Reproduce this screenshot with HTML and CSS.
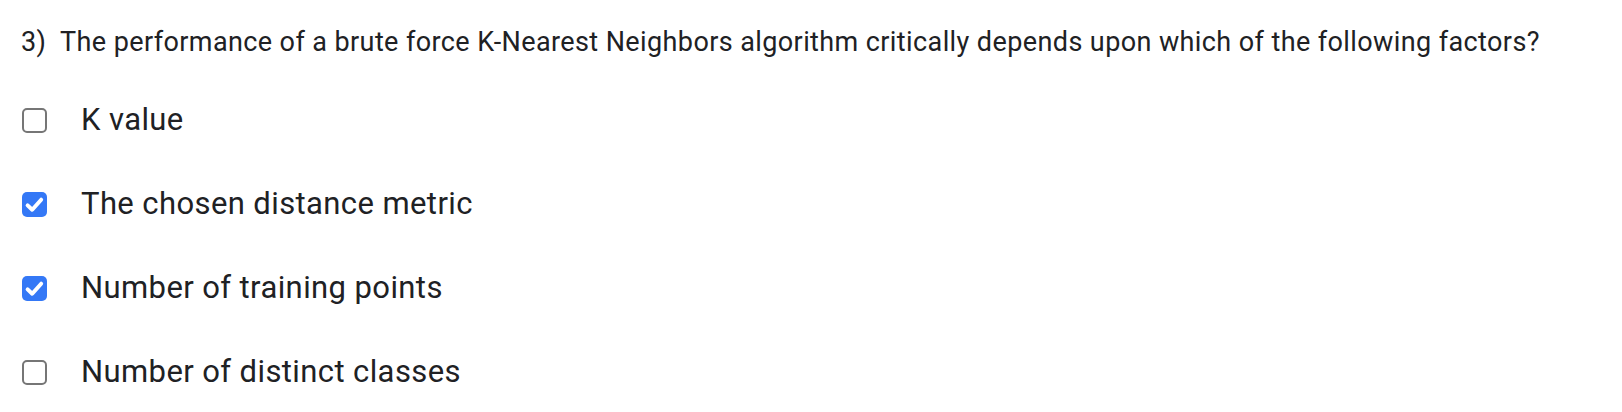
FILE: index.html
```html
<!DOCTYPE html>
<html>
<head>
<meta charset="utf-8">
<link rel="stylesheet" href="styles.css">
</head>
<body>
<div class="quiz">
  <div class="question">3)&nbsp; The performance of a brute force K-Nearest Neighbors algorithm critically depends upon which of the following factors?</div>
  <div class="options">
    <div class="option">
      <span class="box"></span>
      <span class="label">K value</span>
    </div>
    <div class="option">
      <span class="box checked"><svg viewBox="0 0 24 24" width="25" height="25"><path d="M5.4 12.8 L9.8 17 L18.4 7.4" fill="none" stroke="#fff" stroke-width="3.8" stroke-linecap="round" stroke-linejoin="round"/></svg></span>
      <span class="label">The chosen distance metric</span>
    </div>
    <div class="option">
      <span class="box checked"><svg viewBox="0 0 24 24" width="25" height="25"><path d="M5.4 12.8 L9.8 17 L18.4 7.4" fill="none" stroke="#fff" stroke-width="3.8" stroke-linecap="round" stroke-linejoin="round"/></svg></span>
      <span class="label">Number of training points</span>
    </div>
    <div class="option">
      <span class="box"></span>
      <span class="label">Number of distinct classes</span>
    </div>
  </div>
</div>
</body>
</html>
```
FILE: styles.css
```css
html, body {
  margin: 0;
  padding: 0;
  background: #ffffff;
}
body {
  font-family: Roboto, "Liberation Sans", sans-serif;
  color: #202124;
}
.quiz {
  padding: 27px 0 0 21px;
}
.question {
  font-size: 27px;
  letter-spacing: 0.4px;
  line-height: 30px;
  white-space: nowrap;
}
.options {
  display: flex;
  flex-direction: column;
  gap: 44px;
  margin-top: 43px;
}
.option {
  display: flex;
  align-items: center;
  gap: 34px;
  height: 40px;
  padding-left: 1px;
}
.box {
  box-sizing: border-box;
  width: 25px;
  height: 25px;
  border: 2px solid #767676;
  border-radius: 5px;
  flex: none;
  display: flex;
}
.box.checked {
  border: none;
  background: #3478f6;
}
.label {
  font-size: 31px;
  letter-spacing: 0.4px;
  line-height: 40px;
}
```
